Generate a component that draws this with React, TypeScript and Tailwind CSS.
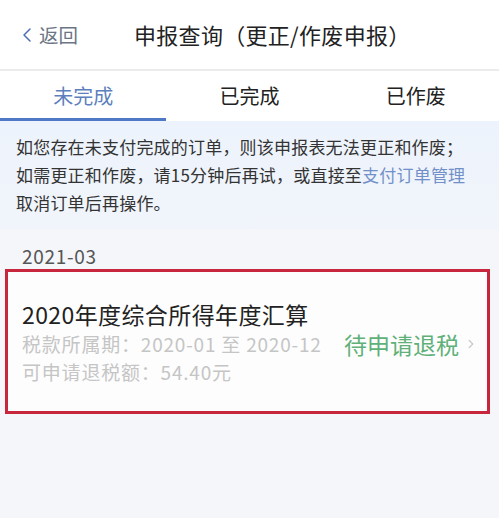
import { ChevronLeft, ChevronRight } from 'lucide-react'

const tabs = ['未完成', '已完成', '已作废']

export default function App() {
  return (
    <div
      className="w-[499px] h-[518px] overflow-hidden bg-[#f4f6fa] flex flex-col"
      style={{ fontFamily: '"Noto Sans CJK SC", "Noto Sans", sans-serif' }}
    >
      {/* Header */}
      <div className="h-[71px] shrink-0 bg-white flex items-center border-b-2 border-[#ececec]">
        <div className="flex items-center pl-[15px] text-[19.5px] text-[#6b7585]">
          <ChevronLeft className="w-[24px] h-[30px] text-[#4d6fb5]" strokeWidth={1.5} />
          <span>返回</span>
        </div>
        <h1 className="ml-[56px] text-[22px] text-[#222] tracking-[0.3px]">申报查询（更正/作废申报）</h1>
      </div>

      {/* Tabs */}
      <div className="h-[50px] shrink-0 bg-white grid grid-cols-3">
        {tabs.map((t, i) => (
          <div key={t} className="relative flex items-center justify-center pb-[1px]">
            <span className={i === 0 ? 'text-[20px] text-[#5d7fbe]' : 'text-[20px] text-[#222]'}>{t}</span>
            {i === 0 && <div className="absolute left-0 right-0 bottom-0 h-[3px] bg-[#4f78c5]" />}
          </div>
        ))}
      </div>

      {/* Notice */}
      <div className="bg-gradient-to-b from-[#edf3fc] to-[#f1f5fb] px-[16px] pt-[12px] pb-[12px] text-[17px] leading-[28px] text-[#333] tracking-[0.2px]">
        <p>如您存在未支付完成的订单，则该申报表无法更正和作废；</p>
        <p>
          如需更正和作废，请15分钟后再试，或直接至<span className="text-[#7290c8]">支付订单管理</span>
        </p>
        <p>取消订单后再操作。</p>
      </div>

      {/* List */}
      <div className="px-[5px] pt-[15px]">
        <div className="pl-[17px] text-[19px] leading-[24px] text-[#555] tracking-[0.7px]">2021-03</div>
        <div className="mt-[1px] w-[485px] border-[3px] border-[#c8263c] bg-[#fdfdfd] pl-[14px] pr-[9px] pt-[26px] pb-[25px]">
          <div className="text-[23px] leading-[32px] text-[#222] tracking-[0.4px]">2020年度综合所得年度汇算</div>
          <div className="flex items-center justify-between h-[28px] text-[19px] leading-[28px] text-[#c5c5c5]">
            <span className="tracking-[0.8px]">税款所属期：2020-01 至 2020-12</span>
            <span className="flex items-center">
              <span className="text-[23px] leading-[28px] text-[#5fb079]">待申请退税</span>
              <ChevronRight className="ml-[5px] w-[14px] h-[14px] text-[#c8c8c8]" strokeWidth={2} />
            </span>
          </div>
          <div className="text-[19px] leading-[28px] text-[#c5c5c5] tracking-[0.8px]">可申请退税额：54.40元</div>
        </div>
      </div>
    </div>
  )
}
